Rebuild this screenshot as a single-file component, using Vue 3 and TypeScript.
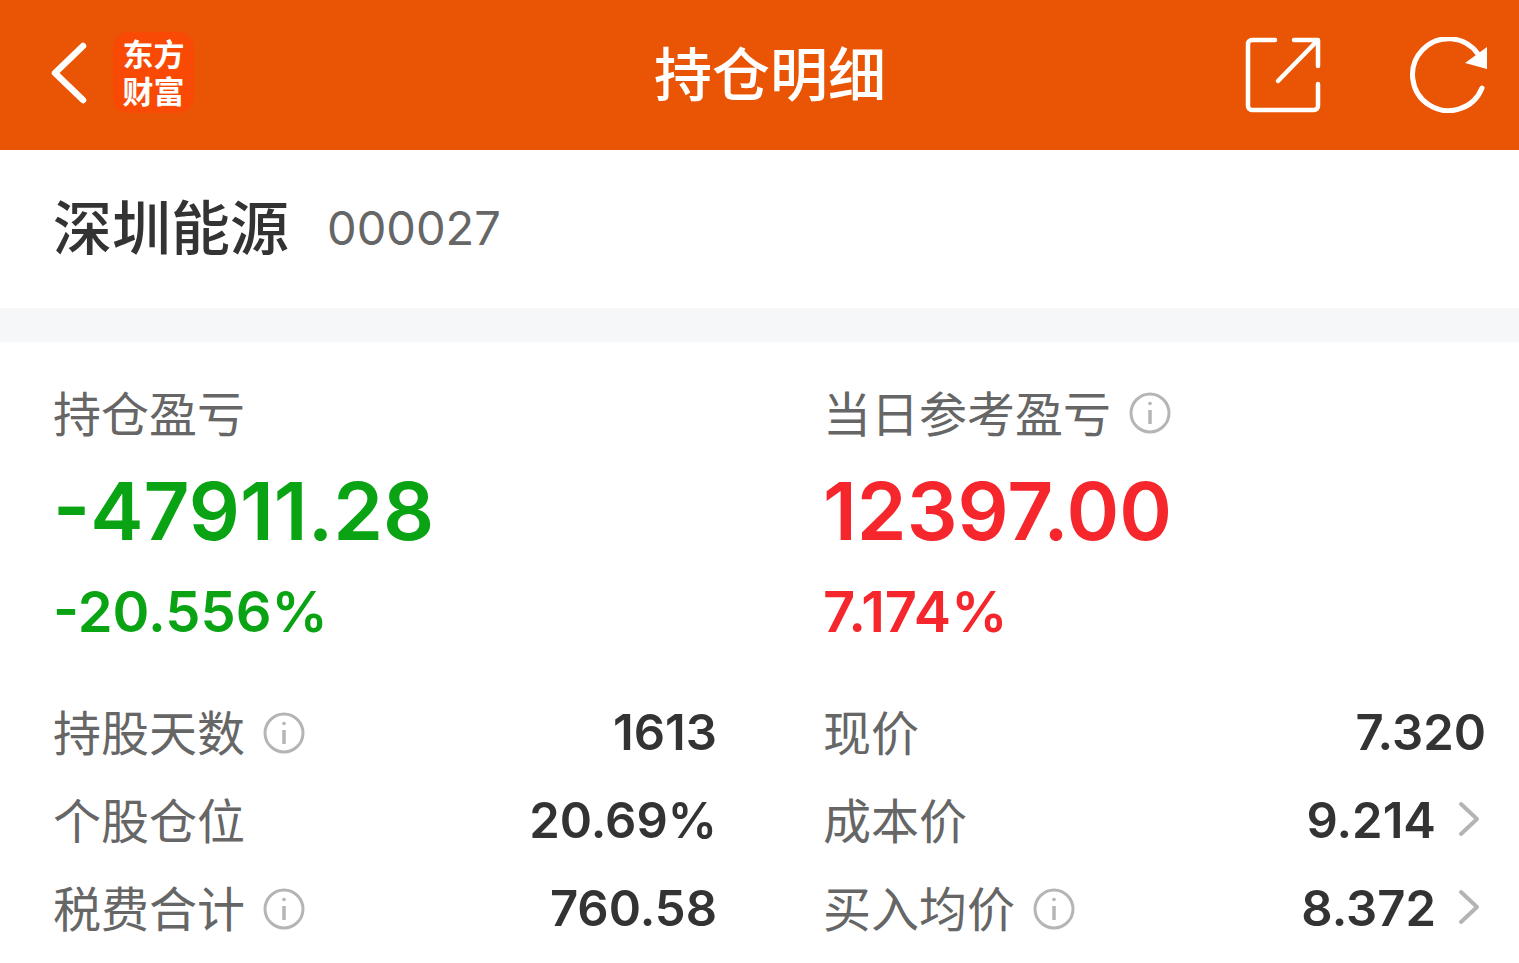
<template>
  <div class="page">
    <header class="topbar">
      <div class="topbar-left">
        <svg class="back" width="40" height="64" viewBox="0 0 40 64" fill="none" stroke="#fff" stroke-width="6.5" stroke-linecap="round" stroke-linejoin="round"><path d="M33 5 L5 32 L33 59" /></svg>
        <div class="logo"><span>东方</span><span>财富</span></div>
      </div>
      <h1 class="title">持仓明细</h1>
      <div class="topbar-right">
        <svg width="76" height="76" viewBox="0 0 76 76" fill="none" stroke="#fff" stroke-width="4.5" stroke-linecap="round" stroke-linejoin="round">
          <path d="M30 3 H7 a4 4 0 0 0 -4 4 V69 a4 4 0 0 0 4 4 H69 a4 4 0 0 0 4 -4 V47" />
          <path d="M49 3 H73 V29" />
          <path d="M71 5 L33 44" />
        </svg>
        <svg width="78" height="76" viewBox="0 0 78 76" fill="none">
          <path d="M73 51 A36 36 0 1 1 69 17" stroke="#fff" stroke-width="5" stroke-linecap="round" />
          <path d="M56 26 L78 10 V32 Z" fill="#fff" />
        </svg>
      </div>
    </header>

    <section class="stock">
      <span class="stock-name">深圳能源</span>
      <span class="stock-code">000027</span>
    </section>
    <div class="divider"></div>

    <section class="summary">
      <div v-for="card in cards" :key="card.label" class="summary-col">
        <div class="summary-label">
          <span>{{ card.label }}</span>
          <svg v-if="card.info" class="info" viewBox="0 0 42 42" fill="none" stroke="#b5b5b5" stroke-width="3"><circle cx="21" cy="21" r="19" /><path d="M21 18 V32" stroke-width="3.5" /><circle cx="21" cy="11.5" r="1.8" fill="#b5b5b5" stroke="none" /></svg>
        </div>
        <div class="summary-value" :class="card.tone">{{ card.value }}</div>
        <div class="summary-rate" :class="card.tone">{{ card.rate }}</div>
      </div>
    </section>

    <section class="details">
      <div v-for="col in columns" :key="col[0].label" class="details-col">
        <div v-for="row in col" :key="row.label" class="detail-row">
          <span class="detail-label">{{ row.label }}</span>
          <svg v-if="row.info" class="info" viewBox="0 0 42 42" fill="none" stroke="#b5b5b5" stroke-width="3"><circle cx="21" cy="21" r="19" /><path d="M21 18 V32" stroke-width="3.5" /><circle cx="21" cy="11.5" r="1.8" fill="#b5b5b5" stroke="none" /></svg>
          <span class="detail-value">{{ row.value }}</span>
          <svg v-if="row.arrow" class="chevron" width="22" height="36" viewBox="0 0 22 36" fill="none" stroke="#b4b4b4" stroke-width="4" stroke-linecap="round" stroke-linejoin="round"><path d="M3 3 L19 18 L3 33" /></svg>
        </div>
      </div>
    </section>
  </div>
</template>

<script setup lang="ts">
interface Row {
  label: string;
  value: string;
  info?: boolean;
  arrow?: boolean;
}

const cards = [
  { label: '持仓盈亏', value: '-47911.28', rate: '-20.556%', tone: 'down', info: false },
  { label: '当日参考盈亏', value: '12397.00', rate: '7.174%', tone: 'up', info: true },
];

const columns: Row[][] = [
  [
    { label: '持股天数', value: '1613', info: true },
    { label: '个股仓位', value: '20.69%' },
    { label: '税费合计', value: '760.58', info: true },
  ],
  [
    { label: '现价', value: '7.320' },
    { label: '成本价', value: '9.214', arrow: true },
    { label: '买入均价', value: '8.372', info: true, arrow: true },
  ],
];
</script>

<style>
html, body { background: #fff; overflow: hidden; }
</style>

<style scoped>
.page { width: 1519px; height: 963px; overflow: hidden; background: #fff; font-family: Inter, "Noto Sans CJK SC", sans-serif; color: #333; }
.topbar { height: 150px; background: #e95504; display: flex; align-items: center; justify-content: space-between; padding: 0 32px 0 50px; position: relative; }
.topbar-left { display: flex; align-items: center; gap: 26px; }
.back { display: block; margin-top: -4px; }
.logo { width: 81px; height: 81px; margin-top: -6px; margin-left: -3px; padding-top: 4px; box-sizing: border-box; border-radius: 16px; background: #f94a05; color: #fff; display: flex; flex-direction: column; align-items: center; justify-content: center; font-size: 31px; line-height: 37px; font-family: "Liberation Sans", "Noto Sans CJK SC", sans-serif; font-weight: 700; }
.title { position: absolute; left: 654px; top: -4px; margin: 0; line-height: 150px; font-size: 58px; font-weight: 500; color: #fff; font-family: "Noto Sans CJK SC", sans-serif; }
.topbar-right { display: flex; align-items: center; gap: 88px; }
.stock { height: 158px; display: flex; align-items: center; padding: 0 0 10px 53px; box-sizing: border-box; gap: 38px; }
.stock-name { font-size: 59px; font-weight: 500; color: #333; font-family: "Noto Sans CJK SC", sans-serif; }
.stock-code { font-size: 47px; color: #666; margin-top: 6px; }
.divider { height: 34px; background: #f6f7f9; }
.summary { display: flex; padding-top: 38px; }
.summary-col { width: 770px; padding-left: 53px; box-sizing: border-box; }
.summary-col:last-child { width: 749px; }
.summary-label { display: flex; align-items: center; gap: 18px; font-size: 48px; line-height: 62px; color: #666; font-family: "Noto Sans CJK SC", sans-serif; }
.summary-label .info { margin-top: 4px; }
.summary-value { font-size: 80px; line-height: 92px; margin-top: 23px; font-weight: 600; }
.summary-rate { font-size: 56px; line-height: 66px; margin-top: 22px; font-weight: 600; }
.down { color: #0aa314; }
.up { color: #f5262c; }
.details { display: flex; padding-top: 42px; }
.details-col { width: 770px; padding: 0 53px; box-sizing: border-box; }
.details-col:last-child { width: 749px; padding: 0 33px 0 53px; }
.detail-row { height: 88px; display: flex; align-items: center; }
.detail-label { font-size: 48px; color: #666; margin-top: -3px; font-family: "Noto Sans CJK SC", sans-serif; }
.detail-value { margin-left: auto; font-size: 49px; font-weight: 600; color: #333; margin-top: 2px; }
.info { width: 42px; height: 42px; flex: none; }
.detail-row .info { margin-left: 18px; margin-top: 3px; }
.chevron { margin-left: 22px; margin-right: 6px; }
</style>
